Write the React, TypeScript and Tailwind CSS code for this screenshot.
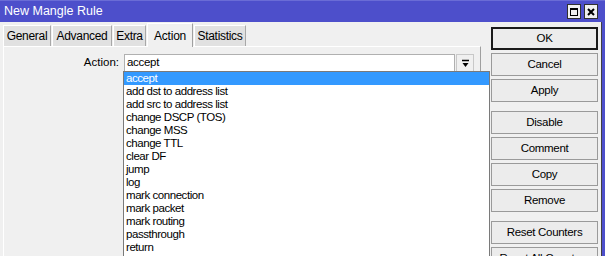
import React from "react";

const tabs = [
  { label: "General", w: "w-[48px]" },
  { label: "Advanced", w: "w-[60px]" },
  { label: "Extra", w: "w-[33px]" },
  { label: "Action", w: "w-[46px]", active: true },
  { label: "Statistics", w: "w-[52px]" },
];

const actions = [
  "accept",
  "add dst to address list",
  "add src to address list",
  "change DSCP (TOS)",
  "change MSS",
  "change TTL",
  "clear DF",
  "jump",
  "log",
  "mark connection",
  "mark packet",
  "mark routing",
  "passthrough",
  "return",
];

const Btn = ({ label, def, className = "" }: { label: string; def?: boolean; className?: string }) => (
  <div
    className={`h-[23px] w-[107px] flex items-center justify-center bg-[#ececec] text-[11.5px] tracking-[-0.3px] text-black ${
      def ? "border-2 border-[#1a1a1a]" : "border border-[#9a9a9a]"
    } ${className}`}
  >
    {label}
  </div>
);

const App = () => {
  return (
    <div
      className="w-[605px] h-[256px] overflow-hidden flex flex-col bg-[#f0f0f0] text-[11px] text-black"
      style={{ fontFamily: '"Liberation Sans", Arial, sans-serif' }}
    >
      {/* title bar */}
      <div className="h-[22px] shrink-0 flex items-center bg-[#4d4fcb] border-t border-[#6a6cd6]">
        <span className="pl-[4px] text-[12.5px] text-white">New Mangle Rule</span>
        <div className="ml-auto mr-[7px] flex gap-[3px]">
          <div className="w-[14px] h-[15px] bg-[#f0f0f0] border border-[#303030] flex items-center justify-center">
            <div className="w-[8px] h-[8px] border border-black border-t-2" />
          </div>
          <div className="w-[14px] h-[15px] bg-[#f0f0f0] border border-[#303030] flex items-center justify-center">
            <svg width="8" height="8" viewBox="0 0 8 8">
              <path d="M1 1 L7 7 M7 1 L1 7" stroke="#000" strokeWidth="2" />
            </svg>
          </div>
        </div>
      </div>

      {/* body */}
      <div className="flex-1 flex">
        <div className="flex-1 flex border-r border-[#404040]">
          {/* left side */}
          <div className="w-[491px] relative flex flex-col">
            <div className="h-[24px] pl-[3px] flex items-end gap-[1px]">
              {tabs.map((t) =>
                t.active ? (
                  <div
                    key={t.label}
                    className={`${t.w} h-[24px] -mb-[1px] z-10 flex items-center justify-center bg-[#f0f0f0] border-l border-t border-white border-r border-r-[#a0a0a0] text-[12px] tracking-[-0.2px]`}
                  >
                    {t.label}
                  </div>
                ) : (
                  <div
                    key={t.label}
                    className={`${t.w} h-[21px] flex items-center justify-center bg-[#e1e1e1] border-l border-t border-white border-r border-r-[#a8a8a8] text-[12px] tracking-[-0.3px]`}
                  >
                    {t.label}
                  </div>
                )
              )}
            </div>
            <div className="ml-[3px] w-[478px] flex-1 border-t border-l border-white border-r border-r-[#a0a0a0] pt-[7px]">
              <div className="flex items-center h-[18px]">
                <div className="w-[115px] text-right text-[11.5px]">Action:</div>
                <div className="ml-[5px] w-[331px] h-[18px] bg-white border border-[#b0b0b0] flex items-center pl-[2px] text-[11.5px] tracking-[-0.3px]">
                  accept
                </div>
                <div className="w-[18px] h-[18px] ml-[1px] border border-[#c8c8c8] bg-[#f0f0f0] flex items-center justify-center">
                  <svg width="9" height="9" viewBox="0 0 9 9">
                    <path d="M1 1.5 H8" stroke="#000" strokeWidth="1.5" />
                    <path d="M1.5 4 H7.5 L4.5 8 Z" fill="#000" />
                  </svg>
                </div>
              </div>
            </div>

            {/* open dropdown list */}
            <div className="absolute left-[123px] top-[49px] w-[367px] h-[200px] bg-white border border-[#7a7a7a]">
              {actions.map((a, i) => (
                <div
                  key={a}
                  className={`h-[13px] leading-[13px] pl-[2px] text-[11.5px] tracking-[-0.45px] ${
                    i === 0 ? "bg-[#3399ff] text-white" : "text-black"
                  }`}
                >
                  {a}
                </div>
              ))}
            </div>
          </div>

          {/* buttons */}
          <div className="flex flex-col pt-[5px]">
            <Btn label="OK" def />
            <Btn label="Cancel" className="mt-[3px]" />
            <Btn label="Apply" className="mt-[3px]" />
            <Btn label="Disable" className="mt-[9px]" />
            <Btn label="Comment" className="mt-[3px]" />
            <Btn label="Copy" className="mt-[3px]" />
            <Btn label="Remove" className="mt-[3px]" />
            <Btn label="Reset Counters" className="mt-[9px]" />
            <Btn label="Reset All Counters" className="mt-[3px]" />
          </div>
        </div>
        <div className="w-[3px] bg-[#4d4fcb]" />
      </div>
    </div>
  );
};

export default App;
